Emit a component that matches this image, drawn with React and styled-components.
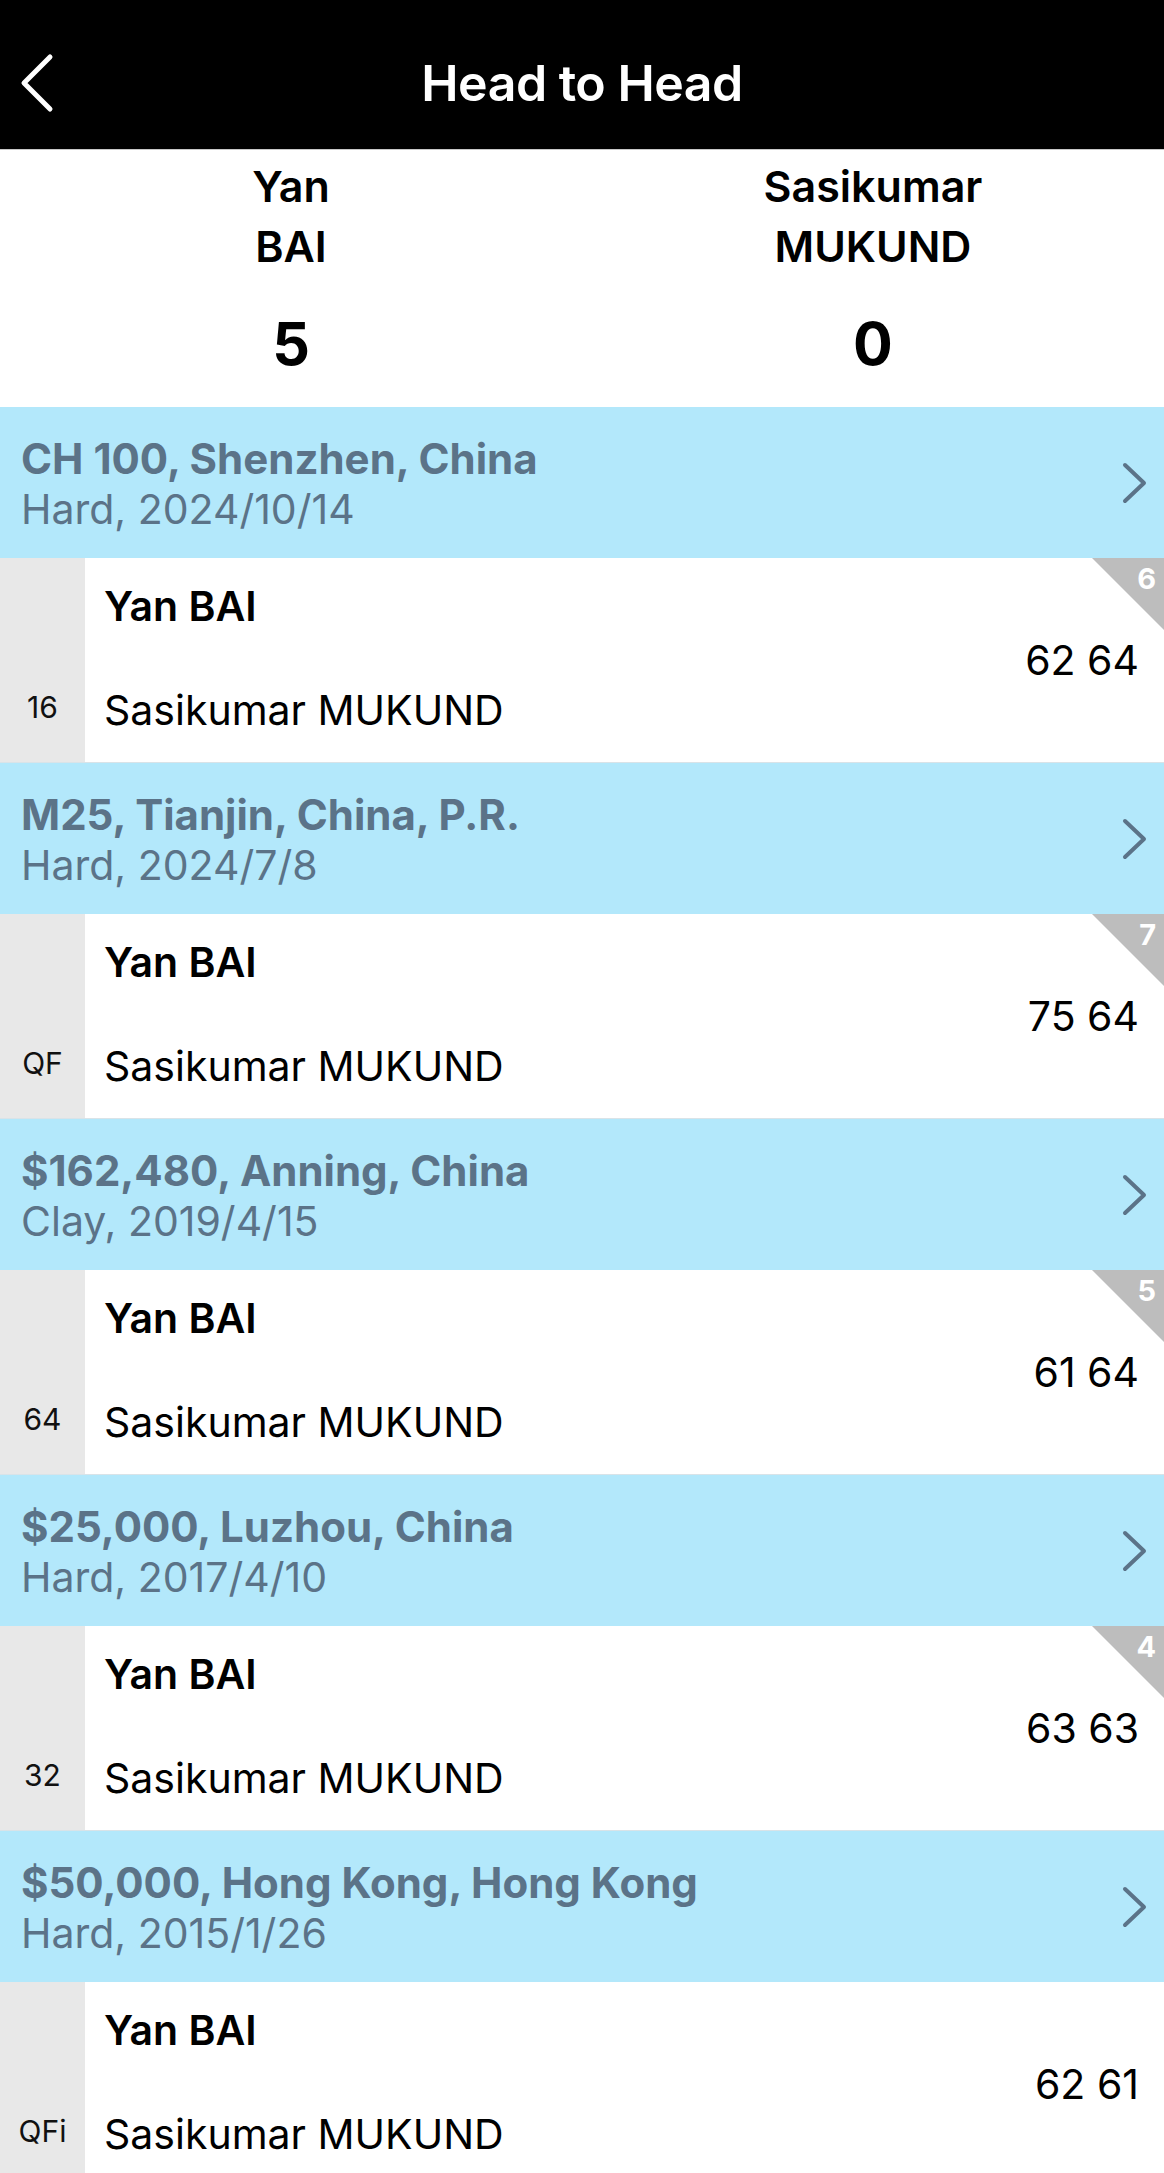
import React from "react";
import styled, { createGlobalStyle } from "styled-components";

const GlobalStyle = createGlobalStyle`
  html, body {
    margin: 0;
    padding: 0;
    background: #ffffff;
  }
  body {
    font-family: Inter, "Noto Sans", "Liberation Sans", sans-serif;
    -webkit-font-smoothing: antialiased;
  }
`;

const matches = [
  {
    id: 1,
    event: "CH 100, Shenzhen, China",
    detail: "Hard, 2024/10/14",
    round: "16",
    score: "62 64",
    corner: "6",
  },
  {
    id: 2,
    event: "M25, Tianjin, China, P.R.",
    detail: "Hard, 2024/7/8",
    round: "QF",
    score: "75 64",
    corner: "7",
  },
  {
    id: 3,
    event: "$162,480, Anning, China",
    detail: "Clay, 2019/4/15",
    round: "64",
    score: "61 64",
    corner: "5",
  },
  {
    id: 4,
    event: "$25,000, Luzhou, China",
    detail: "Hard, 2017/4/10",
    round: "32",
    score: "63 63",
    corner: "4",
  },
  {
    id: 5,
    event: "$50,000, Hong Kong, Hong Kong",
    detail: "Hard, 2015/1/26",
    round: "QFi",
    score: "62 61",
    corner: null,
  },
];

const BackIcon = () => (
  <svg width="40" height="60" viewBox="0 0 40 60" fill="none">
    <polyline
      points="32,4 6,30 32,56"
      stroke="#ffffff"
      strokeWidth="5"
      strokeLinecap="round"
      strokeLinejoin="round"
    />
  </svg>
);

const ChevronRight = () => (
  <svg width="28" height="42" viewBox="0 0 28 42" fill="none">
    <polyline
      points="4,3 23,21 4,39"
      stroke="#5b7388"
      strokeWidth="4"
      strokeLinecap="round"
      strokeLinejoin="round"
    />
  </svg>
);

const App = () => {
  return (
    <>
      <GlobalStyle />
      <Page>
        <NavBar>
          <BackButton>
            <BackIcon />
          </BackButton>
          <NavTitle>Head to Head</NavTitle>
        </NavBar>
        <Players>
          <PlayerColumn>
            <PlayerName>Yan</PlayerName>
            <PlayerName>BAI</PlayerName>
            <Wins>5</Wins>
          </PlayerColumn>
          <PlayerColumn>
            <PlayerName>Sasikumar</PlayerName>
            <PlayerName>MUKUND</PlayerName>
            <Wins>0</Wins>
          </PlayerColumn>
        </Players>
        {matches.map((match) => (
          <section key={match.id}>
            <EventRow>
              <EventText>
                <EventName>{match.event}</EventName>
                <EventDetail>{match.detail}</EventDetail>
              </EventText>
              <ChevronRight />
            </EventRow>
            <MatchRow>
              <RoundCell>{match.round}</RoundCell>
              <Names>
                <Name $winner>Yan BAI</Name>
                <Name>Sasikumar MUKUND</Name>
              </Names>
              <Score>{match.score}</Score>
              {match.corner && <Corner>{match.corner}</Corner>}
            </MatchRow>
          </section>
        ))}
      </Page>
    </>
  );
};

const Page = styled.div`
  width: 1164px;
  min-height: 2173px;
  background: #ffffff;
  color: #000000;
  overflow: hidden;
`;

const NavBar = styled.header`
  position: relative;
  height: 150px;
  background: #000000;
  border-bottom: 1px solid #c8c8c8;
  box-sizing: border-box;
  display: flex;
  align-items: center;
  justify-content: center;
`;

const BackButton = styled.div`
  position: absolute;
  left: 18px;
  top: 53px;
  display: flex;
`;

const NavTitle = styled.h1`
  margin: 0;
  color: #ffffff;
  font-size: 50px;
  font-weight: 600;
  letter-spacing: -0.5px;
  line-height: 1;
  margin-top: 16px;
`;

const Players = styled.div`
  display: grid;
  grid-template-columns: 1fr 1fr;
  height: 257px;
  box-sizing: border-box;
  padding-top: 6px;
`;

const PlayerColumn = styled.div`
  display: flex;
  flex-direction: column;
  align-items: center;
`;

const PlayerName = styled.div`
  font-size: 43px;
  font-weight: 600;
  line-height: 60px;
`;

const Wins = styled.div`
  font-size: 59px;
  font-weight: 700;
  line-height: 60px;
  margin-top: 38px;
`;

const EventRow = styled.div`
  display: flex;
  align-items: center;
  justify-content: space-between;
  height: 151px;
  box-sizing: border-box;
  padding: 0 15px 0 21px;
  background: #b3e8fb;
  color: #5b7388;
`;

const EventText = styled.div`
  display: flex;
  flex-direction: column;
  padding-top: 2px;
`;

const EventName = styled.div`
  font-size: 42px;
  font-weight: 700;
  line-height: 50px;
`;

const EventDetail = styled.div`
  font-size: 41px;
  font-weight: 400;
  line-height: 50px;
`;

const MatchRow = styled.div`
  position: relative;
  display: grid;
  grid-template-columns: 85px 1fr auto;
  height: 205px;
  box-sizing: border-box;
  border-bottom: 1px solid #d9e3e8;
  background: #ffffff;
`;

const RoundCell = styled.div`
  background: #e8e8e8;
  display: flex;
  align-items: flex-end;
  justify-content: center;
  padding-bottom: 38px;
  font-size: 30px;
  line-height: 34px;
  color: #111111;
`;

const Names = styled.div`
  display: flex;
  flex-direction: column;
  justify-content: space-between;
  padding: 24px 0 28px 19px;
`;

const Name = styled.div`
  font-size: 41px;
  line-height: 48px;
  font-weight: ${(p) => (p.$winner ? 600 : 400)};
`;

const Score = styled.div`
  align-self: center;
  padding-right: 25px;
  font-size: 41px;
  line-height: 50px;
`;

const Corner = styled.div`
  position: absolute;
  top: 0;
  right: 0;
  width: 72px;
  height: 72px;
  background: #bdbdbd;
  clip-path: polygon(0 0, 100% 0, 100% 100%);
  color: #ffffff;
  font-size: 29px;
  font-weight: 700;
  line-height: 1;
  box-sizing: border-box;
  padding: 6px 8px 0 0;
  text-align: right;
`;

export default App;
